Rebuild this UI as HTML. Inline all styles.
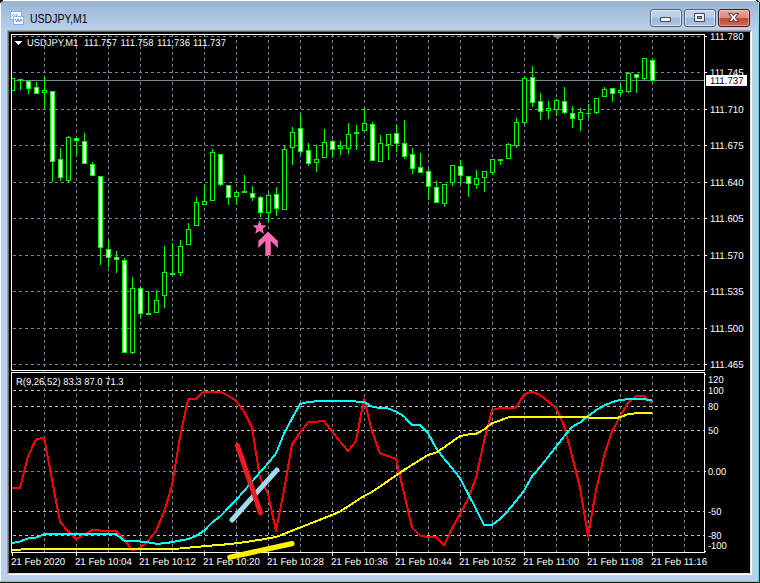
<!DOCTYPE html>
<html><head><meta charset="utf-8"><title>USDJPY,M1</title>
<style>
html,body{margin:0;padding:0;background:#b9d1ea;}
body{width:760px;height:583px;position:relative;overflow:hidden;font-family:"Liberation Sans",sans-serif;}
#win{position:absolute;left:0;top:0;width:760px;height:583px;background:#b9d1ea;overflow:hidden}
#title{position:absolute;left:0;top:0;width:760px;height:30px;background:linear-gradient(#98b2d0,#a6bfdd 40%,#b9d1ea);}
#hl-top{position:absolute;left:0;top:0;width:759px;height:1px;background:#fff}
#hl-left{position:absolute;left:0;top:0;width:1px;height:582px;background:#fdfeff}
#corner{position:absolute;left:0;top:0;width:3px;height:3px;}
#edge-r1{position:absolute;left:758px;top:0;width:1px;height:582px;background:linear-gradient(#a8e8fb 0,#46d7ff 40px)}
#edge-r2{position:absolute;left:759px;top:0;width:1px;height:583px;background:#1c1c1c}
#edge-b1{position:absolute;left:0;top:581px;width:759px;height:1px;background:#46d7ff}
#edge-b2{position:absolute;left:0;top:582px;width:760px;height:1px;background:#1c1c1c}
#bev{position:absolute;left:7px;top:30px;width:745px;height:545px;box-sizing:border-box;border:1px solid;border-color:#a0a0a0 #fff #fff #a0a0a0;}
#bev2{position:absolute;left:8px;top:31px;width:743px;height:543px;box-sizing:border-box;border:1px solid;border-color:#696969 #e3e3e3 #e3e3e3 #696969;background:#000}
.t{position:absolute;white-space:pre;line-height:20px;height:20px;font-family:"Liberation Sans",sans-serif;}
.t::before{content:"";display:inline-block;height:20px;vertical-align:baseline}
#ttl{position:absolute;left:30px;top:10px;font-size:12px;line-height:18px;color:#000;transform-origin:0 0;transform:scaleX(0.875);white-space:pre}
.btn{position:absolute;top:9px;height:18px;width:32px;box-sizing:border-box;border:1px solid #56617c;border-radius:3px;background:linear-gradient(#c2d5ec 0,#b7cde8 46%,#9db8d8 50%,#abc4e1 100%);box-shadow:inset 0 0 0 1px rgba(255,255,255,.55)}
#bclose{border-color:#4a1a20;background:linear-gradient(#e9a999 0,#dc8b78 48%,#c04a2f 52%,#cc6c52 100%);box-shadow:inset 0 0 0 1px rgba(255,255,255,.35)}
</style></head><body>
<div id="win">
<div id="title"></div>
<div id="hl-top"></div><div id="hl-left"></div>
<div id="edge-r1"></div><div id="edge-r2"></div><div id="edge-b1"></div><div id="edge-b2"></div>
<div id="bev"></div><div id="bev2"></div>
<div id="ttl">USDJPY,M1</div>
<div class="btn" style="left:650px"></div>
<div class="btn" style="left:684px"></div>
<div class="btn" id="bclose" style="left:718px"></div>
<svg width="760" height="583" viewBox="0 0 760 583" style="position:absolute;left:0;top:0">
<g shape-rendering="crispEdges">
<rect x="9" y="32" width="741" height="541" fill="#000"/>
<line x1="13" x2="703" y1="36.5" y2="36.5" stroke="#778899" stroke-dasharray="3 3"/>
<line x1="13" x2="703" y1="72.5" y2="72.5" stroke="#778899" stroke-dasharray="3 3"/>
<line x1="13" x2="703" y1="109.5" y2="109.5" stroke="#778899" stroke-dasharray="3 3"/>
<line x1="13" x2="703" y1="145.5" y2="145.5" stroke="#778899" stroke-dasharray="3 3"/>
<line x1="13" x2="703" y1="182.5" y2="182.5" stroke="#778899" stroke-dasharray="3 3"/>
<line x1="13" x2="703" y1="218.5" y2="218.5" stroke="#778899" stroke-dasharray="3 3"/>
<line x1="13" x2="703" y1="255.5" y2="255.5" stroke="#778899" stroke-dasharray="3 3"/>
<line x1="13" x2="703" y1="291.5" y2="291.5" stroke="#778899" stroke-dasharray="3 3"/>
<line x1="13" x2="703" y1="328.5" y2="328.5" stroke="#778899" stroke-dasharray="3 3"/>
<line x1="13" x2="703" y1="364.5" y2="364.5" stroke="#778899" stroke-dasharray="3 3"/>
<line x1="13" x2="704" y1="390.5" y2="390.5" stroke="#c0c0c0" stroke-dasharray="3 3"/>
<line x1="13" x2="704" y1="406.5" y2="406.5" stroke="#c0c0c0" stroke-dasharray="3 3"/>
<line x1="13" x2="704" y1="430.5" y2="430.5" stroke="#c0c0c0" stroke-dasharray="3 3"/>
<line x1="13" x2="703" y1="471.5" y2="471.5" stroke="#778899" stroke-dasharray="3 3"/>
<line x1="13" x2="704" y1="511.5" y2="511.5" stroke="#c0c0c0" stroke-dasharray="3 3"/>
<line x1="13" x2="704" y1="535.5" y2="535.5" stroke="#c0c0c0" stroke-dasharray="3 3"/>
<line x1="44.5" x2="44.5" y1="34" y2="552" stroke="#778899" stroke-dasharray="3 3"/>
<line x1="76.5" x2="76.5" y1="34" y2="552" stroke="#778899" stroke-dasharray="3 3"/>
<line x1="108.5" x2="108.5" y1="34" y2="552" stroke="#778899" stroke-dasharray="3 3"/>
<line x1="140.5" x2="140.5" y1="34" y2="552" stroke="#778899" stroke-dasharray="3 3"/>
<line x1="172.5" x2="172.5" y1="34" y2="552" stroke="#778899" stroke-dasharray="3 3"/>
<line x1="204.5" x2="204.5" y1="34" y2="552" stroke="#778899" stroke-dasharray="3 3"/>
<line x1="236.5" x2="236.5" y1="34" y2="552" stroke="#778899" stroke-dasharray="3 3"/>
<line x1="268.5" x2="268.5" y1="34" y2="552" stroke="#778899" stroke-dasharray="3 3"/>
<line x1="300.5" x2="300.5" y1="34" y2="552" stroke="#778899" stroke-dasharray="3 3"/>
<line x1="332.5" x2="332.5" y1="34" y2="552" stroke="#778899" stroke-dasharray="3 3"/>
<line x1="364.5" x2="364.5" y1="34" y2="552" stroke="#778899" stroke-dasharray="3 3"/>
<line x1="396.5" x2="396.5" y1="34" y2="552" stroke="#778899" stroke-dasharray="3 3"/>
<line x1="428.5" x2="428.5" y1="34" y2="552" stroke="#778899" stroke-dasharray="3 3"/>
<line x1="460.5" x2="460.5" y1="34" y2="552" stroke="#778899" stroke-dasharray="3 3"/>
<line x1="492.5" x2="492.5" y1="34" y2="552" stroke="#778899" stroke-dasharray="3 3"/>
<line x1="524.5" x2="524.5" y1="34" y2="552" stroke="#778899" stroke-dasharray="3 3"/>
<line x1="556.5" x2="556.5" y1="34" y2="552" stroke="#778899" stroke-dasharray="3 3"/>
<line x1="588.5" x2="588.5" y1="34" y2="552" stroke="#778899" stroke-dasharray="3 3"/>
<line x1="620.5" x2="620.5" y1="34" y2="552" stroke="#778899" stroke-dasharray="3 3"/>
<line x1="652.5" x2="652.5" y1="34" y2="552" stroke="#778899" stroke-dasharray="3 3"/>
<line x1="684.5" x2="684.5" y1="34" y2="552" stroke="#778899" stroke-dasharray="3 3"/>
<line x1="12" x2="704" y1="80.5" y2="80.5" stroke="#778899"/>
<clipPath id="mc"><rect x="12" y="35" width="692" height="335"/></clipPath><g clip-path="url(#mc)">
<rect x="12" y="78" width="1" height="13" fill="#00ff00"/>
<rect x="10" y="78" width="5" height="13" fill="#00ff00"/>
<rect x="11" y="79" width="3" height="11" fill="#000"/>
<rect x="20" y="79" width="1" height="11" fill="#00ff00"/>
<rect x="18" y="79" width="5" height="2" fill="#00ff00"/>
<rect x="28" y="80" width="1" height="14" fill="#00ff00"/>
<rect x="26" y="81" width="5" height="8" fill="#00ff00"/>
<rect x="27" y="82" width="3" height="6" fill="#fff"/>
<rect x="36" y="82" width="1" height="12" fill="#00ff00"/>
<rect x="34" y="87" width="5" height="7" fill="#00ff00"/>
<rect x="35" y="88" width="3" height="5" fill="#fff"/>
<rect x="44" y="76" width="1" height="33" fill="#00ff00"/>
<rect x="42" y="90" width="5" height="3" fill="#00ff00"/>
<rect x="43" y="91" width="3" height="1" fill="#000"/>
<rect x="52" y="91" width="1" height="91" fill="#00ff00"/>
<rect x="50" y="91" width="5" height="71" fill="#00ff00"/>
<rect x="51" y="92" width="3" height="69" fill="#fff"/>
<rect x="60" y="148" width="1" height="33" fill="#00ff00"/>
<rect x="58" y="159" width="5" height="19" fill="#00ff00"/>
<rect x="59" y="160" width="3" height="17" fill="#fff"/>
<rect x="68" y="136" width="1" height="46" fill="#00ff00"/>
<rect x="66" y="137" width="5" height="44" fill="#00ff00"/>
<rect x="67" y="138" width="3" height="42" fill="#000"/>
<rect x="76" y="138" width="1" height="17" fill="#00ff00"/>
<rect x="74" y="138" width="5" height="3" fill="#00ff00"/>
<rect x="75" y="139" width="3" height="1" fill="#fff"/>
<rect x="84" y="133" width="1" height="31" fill="#00ff00"/>
<rect x="82" y="141" width="5" height="23" fill="#00ff00"/>
<rect x="83" y="142" width="3" height="21" fill="#fff"/>
<rect x="92" y="162" width="1" height="14" fill="#00ff00"/>
<rect x="90" y="164" width="5" height="12" fill="#00ff00"/>
<rect x="91" y="165" width="3" height="10" fill="#fff"/>
<rect x="100" y="176" width="1" height="89" fill="#00ff00"/>
<rect x="98" y="176" width="5" height="72" fill="#00ff00"/>
<rect x="99" y="177" width="3" height="70" fill="#fff"/>
<rect x="108" y="241" width="1" height="26" fill="#00ff00"/>
<rect x="106" y="249" width="5" height="9" fill="#00ff00"/>
<rect x="107" y="250" width="3" height="7" fill="#fff"/>
<rect x="116" y="251" width="1" height="22" fill="#00ff00"/>
<rect x="114" y="257" width="5" height="3" fill="#00ff00"/>
<rect x="115" y="258" width="3" height="1" fill="#fff"/>
<rect x="124" y="258" width="1" height="95" fill="#00ff00"/>
<rect x="122" y="260" width="5" height="93" fill="#00ff00"/>
<rect x="123" y="261" width="3" height="91" fill="#fff"/>
<rect x="132" y="277" width="1" height="77" fill="#00ff00"/>
<rect x="130" y="288" width="5" height="65" fill="#00ff00"/>
<rect x="131" y="289" width="3" height="63" fill="#000"/>
<rect x="140" y="287" width="1" height="31" fill="#00ff00"/>
<rect x="138" y="288" width="5" height="26" fill="#00ff00"/>
<rect x="139" y="289" width="3" height="24" fill="#fff"/>
<rect x="148" y="291" width="1" height="24" fill="#00ff00"/>
<rect x="146" y="313" width="5" height="2" fill="#00ff00"/>
<rect x="156" y="290" width="1" height="23" fill="#00ff00"/>
<rect x="154" y="300" width="5" height="13" fill="#00ff00"/>
<rect x="155" y="301" width="3" height="11" fill="#000"/>
<rect x="164" y="246" width="1" height="62" fill="#00ff00"/>
<rect x="162" y="272" width="5" height="24" fill="#00ff00"/>
<rect x="163" y="273" width="3" height="22" fill="#000"/>
<rect x="172" y="243" width="1" height="32" fill="#00ff00"/>
<rect x="170" y="273" width="5" height="2" fill="#00ff00"/>
<rect x="180" y="240" width="1" height="36" fill="#00ff00"/>
<rect x="178" y="246" width="5" height="27" fill="#00ff00"/>
<rect x="179" y="247" width="3" height="25" fill="#000"/>
<rect x="188" y="223" width="1" height="22" fill="#00ff00"/>
<rect x="186" y="229" width="5" height="16" fill="#00ff00"/>
<rect x="187" y="230" width="3" height="14" fill="#000"/>
<rect x="196" y="197" width="1" height="29" fill="#00ff00"/>
<rect x="194" y="202" width="5" height="24" fill="#00ff00"/>
<rect x="195" y="203" width="3" height="22" fill="#000"/>
<rect x="204" y="184" width="1" height="21" fill="#00ff00"/>
<rect x="202" y="201" width="5" height="4" fill="#00ff00"/>
<rect x="203" y="202" width="3" height="2" fill="#000"/>
<rect x="212" y="149" width="1" height="52" fill="#00ff00"/>
<rect x="210" y="152" width="5" height="49" fill="#00ff00"/>
<rect x="211" y="153" width="3" height="47" fill="#000"/>
<rect x="220" y="154" width="1" height="32" fill="#00ff00"/>
<rect x="218" y="154" width="5" height="31" fill="#00ff00"/>
<rect x="219" y="155" width="3" height="29" fill="#fff"/>
<rect x="228" y="185" width="1" height="20" fill="#00ff00"/>
<rect x="226" y="185" width="5" height="13" fill="#00ff00"/>
<rect x="227" y="186" width="3" height="11" fill="#fff"/>
<rect x="236" y="191" width="1" height="14" fill="#00ff00"/>
<rect x="234" y="192" width="5" height="5" fill="#00ff00"/>
<rect x="235" y="193" width="3" height="3" fill="#000"/>
<rect x="244" y="175" width="1" height="18" fill="#00ff00"/>
<rect x="242" y="191" width="5" height="2" fill="#00ff00"/>
<rect x="252" y="186" width="1" height="15" fill="#00ff00"/>
<rect x="250" y="193" width="5" height="5" fill="#00ff00"/>
<rect x="251" y="194" width="3" height="3" fill="#fff"/>
<rect x="260" y="196" width="1" height="21" fill="#00ff00"/>
<rect x="258" y="197" width="5" height="16" fill="#00ff00"/>
<rect x="259" y="198" width="3" height="14" fill="#fff"/>
<rect x="268" y="193" width="1" height="29" fill="#00ff00"/>
<rect x="266" y="195" width="5" height="18" fill="#00ff00"/>
<rect x="267" y="196" width="3" height="16" fill="#000"/>
<rect x="276" y="187" width="1" height="29" fill="#00ff00"/>
<rect x="274" y="194" width="5" height="15" fill="#00ff00"/>
<rect x="275" y="195" width="3" height="13" fill="#fff"/>
<rect x="284" y="146" width="1" height="64" fill="#00ff00"/>
<rect x="282" y="149" width="5" height="61" fill="#00ff00"/>
<rect x="283" y="150" width="3" height="59" fill="#000"/>
<rect x="292" y="127" width="1" height="38" fill="#00ff00"/>
<rect x="290" y="132" width="5" height="16" fill="#00ff00"/>
<rect x="291" y="133" width="3" height="14" fill="#000"/>
<rect x="300" y="114" width="1" height="40" fill="#00ff00"/>
<rect x="298" y="128" width="5" height="24" fill="#00ff00"/>
<rect x="299" y="129" width="3" height="22" fill="#fff"/>
<rect x="308" y="143" width="1" height="23" fill="#00ff00"/>
<rect x="306" y="150" width="5" height="14" fill="#00ff00"/>
<rect x="307" y="151" width="3" height="12" fill="#fff"/>
<rect x="316" y="145" width="1" height="27" fill="#00ff00"/>
<rect x="314" y="159" width="5" height="4" fill="#00ff00"/>
<rect x="315" y="160" width="3" height="2" fill="#000"/>
<rect x="324" y="129" width="1" height="29" fill="#00ff00"/>
<rect x="322" y="142" width="5" height="16" fill="#00ff00"/>
<rect x="323" y="143" width="3" height="14" fill="#000"/>
<rect x="332" y="140" width="1" height="18" fill="#00ff00"/>
<rect x="330" y="141" width="5" height="9" fill="#00ff00"/>
<rect x="331" y="142" width="3" height="7" fill="#fff"/>
<rect x="340" y="141" width="1" height="14" fill="#00ff00"/>
<rect x="338" y="146" width="5" height="3" fill="#00ff00"/>
<rect x="339" y="147" width="3" height="1" fill="#000"/>
<rect x="348" y="123" width="1" height="31" fill="#00ff00"/>
<rect x="346" y="134" width="5" height="15" fill="#00ff00"/>
<rect x="347" y="135" width="3" height="13" fill="#000"/>
<rect x="356" y="125" width="1" height="25" fill="#00ff00"/>
<rect x="354" y="132" width="5" height="2" fill="#00ff00"/>
<rect x="364" y="108" width="1" height="23" fill="#00ff00"/>
<rect x="362" y="123" width="5" height="8" fill="#00ff00"/>
<rect x="363" y="124" width="3" height="6" fill="#000"/>
<rect x="372" y="122" width="1" height="39" fill="#00ff00"/>
<rect x="370" y="124" width="5" height="37" fill="#00ff00"/>
<rect x="371" y="125" width="3" height="35" fill="#fff"/>
<rect x="380" y="135" width="1" height="27" fill="#00ff00"/>
<rect x="378" y="143" width="5" height="19" fill="#00ff00"/>
<rect x="379" y="144" width="3" height="17" fill="#000"/>
<rect x="388" y="134" width="1" height="26" fill="#00ff00"/>
<rect x="386" y="134" width="5" height="11" fill="#00ff00"/>
<rect x="387" y="135" width="3" height="9" fill="#000"/>
<rect x="396" y="125" width="1" height="27" fill="#00ff00"/>
<rect x="394" y="133" width="5" height="11" fill="#00ff00"/>
<rect x="395" y="134" width="3" height="9" fill="#fff"/>
<rect x="404" y="120" width="1" height="39" fill="#00ff00"/>
<rect x="402" y="143" width="5" height="14" fill="#00ff00"/>
<rect x="403" y="144" width="3" height="12" fill="#fff"/>
<rect x="412" y="148" width="1" height="26" fill="#00ff00"/>
<rect x="410" y="154" width="5" height="15" fill="#00ff00"/>
<rect x="411" y="155" width="3" height="13" fill="#fff"/>
<rect x="420" y="153" width="1" height="20" fill="#00ff00"/>
<rect x="418" y="167" width="5" height="6" fill="#00ff00"/>
<rect x="419" y="168" width="3" height="4" fill="#fff"/>
<rect x="428" y="169" width="1" height="31" fill="#00ff00"/>
<rect x="426" y="171" width="5" height="16" fill="#00ff00"/>
<rect x="427" y="172" width="3" height="14" fill="#fff"/>
<rect x="436" y="181" width="1" height="22" fill="#00ff00"/>
<rect x="434" y="187" width="5" height="16" fill="#00ff00"/>
<rect x="435" y="188" width="3" height="14" fill="#fff"/>
<rect x="444" y="184" width="1" height="23" fill="#00ff00"/>
<rect x="442" y="184" width="5" height="20" fill="#00ff00"/>
<rect x="443" y="185" width="3" height="18" fill="#000"/>
<rect x="452" y="165" width="1" height="21" fill="#00ff00"/>
<rect x="450" y="165" width="5" height="18" fill="#00ff00"/>
<rect x="451" y="166" width="3" height="16" fill="#000"/>
<rect x="460" y="160" width="1" height="24" fill="#00ff00"/>
<rect x="458" y="166" width="5" height="10" fill="#00ff00"/>
<rect x="459" y="167" width="3" height="8" fill="#fff"/>
<rect x="468" y="176" width="1" height="21" fill="#00ff00"/>
<rect x="466" y="176" width="5" height="8" fill="#00ff00"/>
<rect x="467" y="177" width="3" height="6" fill="#fff"/>
<rect x="476" y="170" width="1" height="19" fill="#00ff00"/>
<rect x="474" y="178" width="5" height="7" fill="#00ff00"/>
<rect x="475" y="179" width="3" height="5" fill="#000"/>
<rect x="484" y="171" width="1" height="21" fill="#00ff00"/>
<rect x="482" y="171" width="5" height="7" fill="#00ff00"/>
<rect x="483" y="172" width="3" height="5" fill="#000"/>
<rect x="492" y="159" width="1" height="16" fill="#00ff00"/>
<rect x="490" y="159" width="5" height="14" fill="#00ff00"/>
<rect x="491" y="160" width="3" height="12" fill="#000"/>
<rect x="500" y="159" width="1" height="6" fill="#00ff00"/>
<rect x="498" y="159" width="5" height="2" fill="#00ff00"/>
<rect x="508" y="143" width="1" height="16" fill="#00ff00"/>
<rect x="506" y="144" width="5" height="15" fill="#00ff00"/>
<rect x="507" y="145" width="3" height="13" fill="#000"/>
<rect x="516" y="118" width="1" height="30" fill="#00ff00"/>
<rect x="514" y="122" width="5" height="24" fill="#00ff00"/>
<rect x="515" y="123" width="3" height="22" fill="#000"/>
<rect x="524" y="76" width="1" height="48" fill="#00ff00"/>
<rect x="522" y="78" width="5" height="45" fill="#00ff00"/>
<rect x="523" y="79" width="3" height="43" fill="#000"/>
<rect x="532" y="66" width="1" height="41" fill="#00ff00"/>
<rect x="530" y="77" width="5" height="26" fill="#00ff00"/>
<rect x="531" y="78" width="3" height="24" fill="#fff"/>
<rect x="540" y="93" width="1" height="27" fill="#00ff00"/>
<rect x="538" y="101" width="5" height="11" fill="#00ff00"/>
<rect x="539" y="102" width="3" height="9" fill="#fff"/>
<rect x="548" y="101" width="1" height="18" fill="#00ff00"/>
<rect x="546" y="108" width="5" height="3" fill="#00ff00"/>
<rect x="547" y="109" width="3" height="1" fill="#000"/>
<rect x="556" y="99" width="1" height="17" fill="#00ff00"/>
<rect x="554" y="100" width="5" height="10" fill="#00ff00"/>
<rect x="555" y="101" width="3" height="8" fill="#000"/>
<rect x="564" y="87" width="1" height="27" fill="#00ff00"/>
<rect x="562" y="101" width="5" height="12" fill="#00ff00"/>
<rect x="563" y="102" width="3" height="10" fill="#fff"/>
<rect x="572" y="106" width="1" height="22" fill="#00ff00"/>
<rect x="570" y="113" width="5" height="6" fill="#00ff00"/>
<rect x="571" y="114" width="3" height="4" fill="#fff"/>
<rect x="580" y="108" width="1" height="23" fill="#00ff00"/>
<rect x="578" y="112" width="5" height="8" fill="#00ff00"/>
<rect x="579" y="113" width="3" height="6" fill="#000"/>
<rect x="588" y="104" width="1" height="14" fill="#00ff00"/>
<rect x="586" y="113" width="5" height="1" fill="#00ff00"/>
<rect x="596" y="98" width="1" height="16" fill="#00ff00"/>
<rect x="594" y="98" width="5" height="15" fill="#00ff00"/>
<rect x="595" y="99" width="3" height="13" fill="#000"/>
<rect x="604" y="87" width="1" height="10" fill="#00ff00"/>
<rect x="602" y="89" width="5" height="8" fill="#00ff00"/>
<rect x="603" y="90" width="3" height="6" fill="#000"/>
<rect x="612" y="88" width="1" height="14" fill="#00ff00"/>
<rect x="610" y="88" width="5" height="6" fill="#00ff00"/>
<rect x="611" y="89" width="3" height="4" fill="#fff"/>
<rect x="620" y="85" width="1" height="10" fill="#00ff00"/>
<rect x="618" y="90" width="5" height="3" fill="#00ff00"/>
<rect x="619" y="91" width="3" height="1" fill="#000"/>
<rect x="628" y="72" width="1" height="21" fill="#00ff00"/>
<rect x="626" y="73" width="5" height="19" fill="#00ff00"/>
<rect x="627" y="74" width="3" height="17" fill="#000"/>
<rect x="636" y="74" width="1" height="19" fill="#00ff00"/>
<rect x="634" y="74" width="5" height="4" fill="#00ff00"/>
<rect x="635" y="75" width="3" height="2" fill="#fff"/>
<rect x="644" y="58" width="1" height="22" fill="#00ff00"/>
<rect x="642" y="58" width="5" height="21" fill="#00ff00"/>
<rect x="643" y="59" width="3" height="19" fill="#000"/>
<rect x="652" y="58" width="1" height="24" fill="#00ff00"/>
<rect x="650" y="60" width="5" height="21" fill="#00ff00"/>
<rect x="651" y="61" width="3" height="19" fill="#fff"/>
</g></g>
<clipPath id="ind"><rect x="12" y="373" width="692" height="179"/></clipPath>
<g clip-path="url(#ind)">
<polyline points="12,488 20,488 28,456 36,439.5 44,437.5 52,479.5 60,522 68,531 76,539.2 84,534.7 92,530.2 100,530.5 108,530.5 116,531 124,538.5 132,550.4 140,548 148,541 156,531 164,512 172,485.5 180,437 188,399.5 196,399 204,391.5 212,391.5 220,391.7 228,395.5 236,401 244,411.5 252,427.5 260,478 268,494 276,531 284,490.5 292,444.5 300,432.5 308,422.5 316,421.7 324,421 332,431.5 340,441.5 348,451 356,441 364,399 372,431 380,453.5 388,456 396,459 404,493 412,527.5 420,535.5 428,537 436,537 444,545.5 452,528.5 460,514 468,499 476,478 484,441.5 492,410 500,408 508,408 516,407.5 524,394.5 532,391.5 540,395 548,401.3 556,408 564,425.5 572,455.5 580,487.5 588,536 596,490.5 604,456 612,431.5 620,416.6 628,402.5 636,396.3 644,395.8 652,403" fill="none" stroke="#ff0000" stroke-width="2" stroke-linejoin="round" shape-rendering="crispEdges"/>
<polyline points="12,543.2 20,541.5 28,538.5 36,537.6 44,534.2 52,534.2 60,534.2 68,534.2 76,534.2 84,534.2 92,534.2 100,534.2 108,534.2 116,534.2 124,540.5 132,541 140,541.5 148,542.3 156,543.7 164,543.4 172,542.1 180,540.6 188,539.1 196,536 204,530.7 212,522.5 220,516.5 228,508.4 236,500 244,491.1 252,481.7 260,472.2 268,463.3 276,453.5 284,433.5 292,418.5 300,404 308,402 316,401.3 324,401 332,401 340,401 348,401.3 356,401.5 364,402 372,406.5 380,408 388,408.5 396,411.5 404,416.5 412,425 420,425 428,433 436,448 444,458.5 452,468 460,478.3 468,493.5 476,509 484,524.8 492,524.8 500,519.2 508,510.6 516,501 524,490.7 532,476.4 540,467 548,457 556,446.7 564,436.5 572,427 580,422.5 588,416.3 596,410.2 604,405.5 612,402.2 620,400 628,399.2 636,399 644,399.3 652,400" fill="none" stroke="#00ffff" stroke-width="2" stroke-linejoin="round" shape-rendering="crispEdges"/>
<polyline points="12,550 20,549.6 28,549 36,549 44,549 52,549 60,549 68,549 76,549 84,549 92,549 100,549 108,548.8 116,548.8 124,548.8 132,548.8 140,548.8 148,548.6 156,548.6 164,548.6 172,548.6 180,548.5 188,547.7 196,547 204,546.2 212,545.5 220,544.9 228,544.2 236,543.3 244,542.2 252,541 260,539.8 268,538.4 276,537 284,533.9 292,530.7 300,527.6 308,524.4 316,521.3 324,518.1 332,515 340,511.5 348,506.5 356,501.3 364,496 372,492 380,486.5 388,481 396,475.5 404,470 412,465 420,460 428,455 436,452.5 444,447.5 452,441.7 460,436.2 468,434.5 476,433.8 484,429.5 492,423.3 500,420.5 508,417.5 516,417.4 524,417.4 532,417.4 540,417.4 548,417.4 556,417.4 564,417.4 572,417.4 580,417.4 588,417.4 596,418 604,418.4 612,418.4 620,417.3 628,414 636,413.3 644,412.8 652,412.8" fill="none" stroke="#ffff00" stroke-width="2" stroke-linejoin="round" shape-rendering="crispEdges"/>
</g>
<polygon points="259.60,220.30 261.48,225.21 266.73,225.48 262.64,228.79 264.01,233.87 259.60,231.00 255.19,233.87 256.56,228.79 252.47,225.48 257.72,225.21" fill="#ff69b4"/>
<polygon points="268,231.4 277.9,241.1 277.9,248 270.8,241 270.8,255.5 265.3,255.5 265.3,241 258.3,248 258.3,241.1" fill="#ff69b4"/>
<polygon points="553,35 562,35 557.5,39.5" fill="#778899"/>
<g shape-rendering="crispEdges" fill="#fff">
<rect x="11" y="34" width="694" height="1"/>
<rect x="11" y="370" width="694" height="1"/>
<rect x="11" y="372" width="694" height="1"/>
<rect x="11" y="552" width="694" height="1"/>
<rect x="11" y="34" width="1" height="519"/>
<rect x="704" y="34" width="1" height="519"/>
<rect x="9" y="371" width="741" height="1" fill="#000"/>
<rect x="44" y="371" width="1" height="1" fill="#778899"/>
<rect x="705" y="36" width="2" height="1"/>
<rect x="705" y="72" width="2" height="1"/>
<rect x="705" y="109" width="2" height="1"/>
<rect x="705" y="145" width="2" height="1"/>
<rect x="705" y="182" width="2" height="1"/>
<rect x="705" y="218" width="2" height="1"/>
<rect x="705" y="255" width="2" height="1"/>
<rect x="705" y="291" width="2" height="1"/>
<rect x="705" y="328" width="2" height="1"/>
<rect x="705" y="364" width="2" height="1"/>
<rect x="705" y="471" width="1" height="1"/>
<rect x="705" y="551" width="1" height="1"/>
<rect x="705" y="374" width="1" height="1"/>
<rect x="12" y="553" width="1" height="3"/>
<rect x="76" y="553" width="1" height="3"/>
<rect x="140" y="553" width="1" height="3"/>
<rect x="204" y="553" width="1" height="3"/>
<rect x="268" y="553" width="1" height="3"/>
<rect x="332" y="553" width="1" height="3"/>
<rect x="396" y="553" width="1" height="3"/>
<rect x="460" y="553" width="1" height="3"/>
<rect x="524" y="553" width="1" height="3"/>
<rect x="588" y="553" width="1" height="3"/>
<rect x="652" y="553" width="1" height="3"/>
<rect x="706" y="75" width="41" height="11"/>
<polygon points="15,41 22,41 18.5,45" />
</g>
<path d="M756 0h2v1h1v1h-2v-1h-1z" fill="#15181a"/><path d="M758 0h2v2h-1v-1h-1z" fill="#c4c4c4"/>
<path d="M0 0h3v1h-1v1h-1v1h-1z" fill="#1a1a1a"/>
<g shape-rendering="geometricPrecision">
<rect x="660" y="17" width="11" height="5" rx="1.2" fill="#474a5e"/><rect x="661" y="18" width="9" height="3" rx=".4" fill="#f3f3ef"/>
<rect x="694" y="13" width="11" height="9" rx="1.2" fill="#474a5e"/><rect x="695" y="14" width="9" height="7" rx=".4" fill="#f3f3ef"/><rect x="697" y="16" width="5" height="3" fill="#474a5e"/><rect x="698" y="17" width="3" height="1" fill="#7fa2d2"/>
<g stroke-linecap="butt"><polygon points="728.6,13.5 732,13.5 733.5,15.5 735,13.5 738.4,13.5 735.4,17.5 738.4,21.5 735,21.5 733.5,19.5 732,21.5 728.6,21.5 731.6,17.5" fill="#f6f4f4" stroke="#5a4a52" stroke-width="1.1" stroke-linejoin="round"/></g>
<rect x="10.5" y="11.5" width="11" height="8" fill="#fdfdff" stroke="#4a86f2" stroke-dasharray="1.2 .8"/>
<path d="M12.5 15.5l1-1.2 1 1.2M15.8 14l1.5 1.8" stroke="#4a86f2" fill="none" stroke-width="1"/>
<rect x="13.5" y="16.5" width="10" height="8" fill="#fdfdff" stroke="#4a86f2" stroke-dasharray="1.2 .8"/>
<path d="M15.3 19.2l1.4 2.6 1.4-2.6 1.4 2.6 1.4-2.6 1 2" stroke="#4a86f2" fill="none" stroke-width="1"/>
</g>
<g font-family="Liberation Sans, sans-serif" style="white-space:pre" xml:space="preserve">
<text transform="translate(27,46) rotate(.05) scale(0.935,1)" fill="#fff" font-size="10" >USDJPY,M1</text>
<text transform="translate(84,46) rotate(.05) scale(0.95,1)" fill="#fff" font-size="10" >111.757</text>
<text transform="translate(120.5,46) rotate(.05) scale(0.95,1)" fill="#fff" font-size="10" >111.758</text>
<text transform="translate(157,46) rotate(.05) scale(0.95,1)" fill="#fff" font-size="10" >111.736</text>
<text transform="translate(193,46) rotate(.05) scale(0.95,1)" fill="#fff" font-size="10" >111.737</text>
<text transform="translate(16,385) rotate(.05) scale(0.945,1)" fill="#fff" font-size="10" >R(9,26,52) 83.3 87.0 71.3</text>
<text transform="translate(710,40) rotate(.05) scale(0.97,1)" fill="#fff" font-size="10" >111.780</text>
<text transform="translate(710,76) rotate(.05) scale(0.97,1)" fill="#fff" font-size="10" >111.745</text>
<text transform="translate(710,113) rotate(.05) scale(0.97,1)" fill="#fff" font-size="10" >111.710</text>
<text transform="translate(710,149) rotate(.05) scale(0.97,1)" fill="#fff" font-size="10" >111.675</text>
<text transform="translate(710,186) rotate(.05) scale(0.97,1)" fill="#fff" font-size="10" >111.640</text>
<text transform="translate(710,222) rotate(.05) scale(0.97,1)" fill="#fff" font-size="10" >111.605</text>
<text transform="translate(710,259) rotate(.05) scale(0.97,1)" fill="#fff" font-size="10" >111.570</text>
<text transform="translate(710,295) rotate(.05) scale(0.97,1)" fill="#fff" font-size="10" >111.535</text>
<text transform="translate(710,332) rotate(.05) scale(0.97,1)" fill="#fff" font-size="10" >111.500</text>
<text transform="translate(710,368) rotate(.05) scale(0.97,1)" fill="#fff" font-size="10" >111.465</text>
<text transform="translate(710,84) rotate(.05) scale(0.97,1)" fill="#000" font-size="10" >111.737</text>
<text transform="translate(708,383) rotate(.05) scale(0.935,1)" fill="#fff" font-size="10" >120</text>
<text transform="translate(708,394) rotate(.05) scale(0.935,1)" fill="#fff" font-size="10" >100</text>
<text transform="translate(708,410) rotate(.05) scale(0.935,1)" fill="#fff" font-size="10" >80</text>
<text transform="translate(708,434) rotate(.05) scale(0.935,1)" fill="#fff" font-size="10" >50</text>
<text transform="translate(708,475) rotate(.05) scale(0.935,1)" fill="#fff" font-size="10" >0.00</text>
<text transform="translate(708,515) rotate(.05) scale(0.935,1)" fill="#fff" font-size="10" >-50</text>
<text transform="translate(708,539) rotate(.05) scale(0.935,1)" fill="#fff" font-size="10" >-80</text>
<text transform="translate(708,549) rotate(.05) scale(0.935,1)" fill="#fff" font-size="10" >-100</text>
<text transform="translate(11,565) rotate(.05) scale(0.965,1)" fill="#fff" font-size="10" >21 Feb 2020</text>
<text transform="translate(75,565) rotate(.05) scale(0.965,1)" fill="#fff" font-size="10" >21 Feb 10:04</text>
<text transform="translate(139,565) rotate(.05) scale(0.965,1)" fill="#fff" font-size="10" >21 Feb 10:12</text>
<text transform="translate(203,565) rotate(.05) scale(0.965,1)" fill="#fff" font-size="10" >21 Feb 10:20</text>
<text transform="translate(267,565) rotate(.05) scale(0.965,1)" fill="#fff" font-size="10" >21 Feb 10:28</text>
<text transform="translate(331,565) rotate(.05) scale(0.965,1)" fill="#fff" font-size="10" >21 Feb 10:36</text>
<text transform="translate(395,565) rotate(.05) scale(0.965,1)" fill="#fff" font-size="10" >21 Feb 10:44</text>
<text transform="translate(459,565) rotate(.05) scale(0.965,1)" fill="#fff" font-size="10" >21 Feb 10:52</text>
<text transform="translate(523,565) rotate(.05) scale(0.965,1)" fill="#fff" font-size="10" >21 Feb 11:00</text>
<text transform="translate(587,565) rotate(.05) scale(0.965,1)" fill="#fff" font-size="10" >21 Feb 11:08</text>
<text transform="translate(651,565) rotate(.05) scale(0.965,1)" fill="#fff" font-size="10" >21 Feb 11:16</text>
</g>
<line x1="232" y1="520" x2="277" y2="470" stroke="#a3d9ea" stroke-width="5" stroke-linecap="round"/>
<line x1="237.5" y1="445.5" x2="260.6" y2="513" stroke="#ed1c24" stroke-width="5" stroke-linecap="round"/>
<line x1="229.8" y1="557.2" x2="292" y2="543.6" stroke="#fff200" stroke-width="5.2" stroke-linecap="round"/>
</svg>
</div>
</body></html>
